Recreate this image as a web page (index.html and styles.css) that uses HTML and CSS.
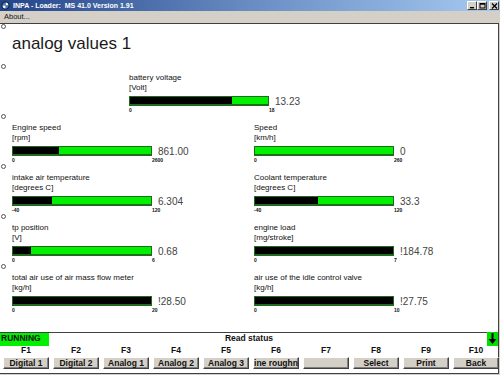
FILE: index.html
```html
<!doctype html>
<html lang="en">
<head>
	<meta charset="UTF-8">
	<title>INPA - Loader</title>
	<link rel="stylesheet" href="styles.css">
</head>
<body>
	<div class="titlebar">
		<svg class="appicon" width="9" height="9" viewBox="0 0 9 9">
			<circle cx="4.5" cy="4.5" r="4.2" fill="#1b2a4a"/>
			<path d="M4.5 1.6 A2.9 2.9 0 0 1 7.4 4.5 L4.5 4.5 Z" fill="#fff"/>
			<path d="M4.5 1.6 A2.9 2.9 0 0 0 1.6 4.5 L4.5 4.5 Z" fill="#3d7fd6"/>
			<path d="M4.5 7.4 A2.9 2.9 0 0 0 7.4 4.5 L4.5 4.5 Z" fill="#3d7fd6"/>
			<path d="M4.5 7.4 A2.9 2.9 0 0 1 1.6 4.5 L4.5 4.5 Z" fill="#fff"/>
		</svg>
		<span class="title">INPA - Loader:  MS 41.0 Version 1.91</span>
		<div class="caps">
			<span class="cap"><svg width="7" height="6" viewBox="0 0 7 6"><rect x="1" y="4" width="4" height="1.4" fill="#000"/></svg></span>
			<span class="cap"><svg width="7" height="6" viewBox="0 0 7 6"><rect x="1" y="0.5" width="5" height="4.5" fill="none" stroke="#000" stroke-width="1"/><rect x="1" y="0.5" width="5" height="1.2" fill="#000"/></svg></span>
			<span class="cap close"><svg width="7" height="6" viewBox="0 0 7 6"><path d="M1 0.5 L6 5.5 M6 0.5 L1 5.5" stroke="#000" stroke-width="1.3"/></svg></span>
		</div>
	</div>
	<div class="menubar"><span>About...</span></div>

	<div class="client">
		<div class="head">
			<i class="dot"></i>
			<h1>analog values 1</h1>
		</div>

		<div class="row">
			<i class="dot"></i>
			<div class="cols solo">
				<div class="gauge">
					<div class="name">battery voltage</div>
					<div class="unit">[Volt]</div>
					<div class="barline"><div class="bar"><div class="fill" style="width:74%"></div></div><span class="val">13.23</span></div>
					<div class="scale"><span class="lo">0</span><span class="hi">18</span></div>
				</div>
			</div>
		</div>

		<div class="row">
			<i class="dot"></i>
			<div class="cols">
				<div class="gauge">
					<div class="name">Engine speed</div>
					<div class="unit">[rpm]</div>
					<div class="barline"><div class="bar"><div class="fill" style="width:33.5%"></div></div><span class="val">861.00</span></div>
					<div class="scale"><span class="lo">0</span><span class="hi">2600</span></div>
				</div>
				<div class="gauge">
					<div class="name">Speed</div>
					<div class="unit">[km/h]</div>
					<div class="barline"><div class="bar"><div class="fill" style="width:0%"></div></div><span class="val">0</span></div>
					<div class="scale"><span class="lo">0</span><span class="hi">260</span></div>
				</div>
			</div>
		</div>

		<div class="row">
			<i class="dot"></i>
			<div class="cols">
				<div class="gauge">
					<div class="name">intake air temperature</div>
					<div class="unit">[degrees C]</div>
					<div class="barline"><div class="bar"><div class="fill" style="width:28.6%"></div></div><span class="val">6.304</span></div>
					<div class="scale"><span class="lo">-40</span><span class="hi">120</span></div>
				</div>
				<div class="gauge">
					<div class="name">Coolant temperature</div>
					<div class="unit">[degrees C]</div>
					<div class="barline"><div class="bar"><div class="fill" style="width:45.8%"></div></div><span class="val">33.3</span></div>
					<div class="scale"><span class="lo">-40</span><span class="hi">120</span></div>
				</div>
			</div>
		</div>

		<div class="row">
			<i class="dot"></i>
			<div class="cols">
				<div class="gauge">
					<div class="name">tp position</div>
					<div class="unit">[V]</div>
					<div class="barline"><div class="bar"><div class="fill" style="width:13%"></div></div><span class="val">0.68</span></div>
					<div class="scale"><span class="lo">0</span><span class="hi">6</span></div>
				</div>
				<div class="gauge">
					<div class="name">engine load</div>
					<div class="unit">[mg/stroke]</div>
					<div class="barline"><div class="bar"><div class="fill" style="width:100%"></div></div><span class="val">!184.78</span></div>
					<div class="scale"><span class="lo">0</span><span class="hi">7</span></div>
				</div>
			</div>
		</div>

		<div class="row">
			<i class="dot"></i>
			<div class="cols">
				<div class="gauge">
					<div class="name">total air use of air mass flow meter</div>
					<div class="unit">[kg/h]</div>
					<div class="barline"><div class="bar"><div class="fill" style="width:100%"></div></div><span class="val">!28.50</span></div>
					<div class="scale"><span class="lo">0</span><span class="hi">20</span></div>
				</div>
				<div class="gauge">
					<div class="name">air use of the idle control valve</div>
					<div class="unit">[kg/h]</div>
					<div class="barline"><div class="bar"><div class="fill" style="width:100%"></div></div><span class="val">!27.75</span></div>
					<div class="scale"><span class="lo">0</span><span class="hi">10</span></div>
				</div>
			</div>
		</div>
	</div>

	<div class="status">
		<span class="running">RUNNING</span>
		<span class="msg">Read status</span>
		<span class="arrow"><svg width="11" height="14" viewBox="0 0 11 14"><rect x="4.5" y="1" width="2" height="7" fill="#000"/><path d="M1.5 7 L9.5 7 L5.5 12 Z" fill="#000"/></svg></span>
	</div>

	<div class="fkeys">
		<div class="fkey"><b>F1</b><div class="btn">Digital 1</div></div>
		<div class="fkey"><b>F2</b><div class="btn">Digital 2</div></div>
		<div class="fkey"><b>F3</b><div class="btn">Analog 1</div></div>
		<div class="fkey"><b>F4</b><div class="btn">Analog 2</div></div>
		<div class="fkey"><b>F5</b><div class="btn">Analog 3</div></div>
		<div class="fkey"><b>F6</b><div class="btn">ine roughn</div></div>
		<div class="fkey"><b>F7</b><div class="btn"></div></div>
		<div class="fkey"><b>F8</b><div class="btn">Select</div></div>
		<div class="fkey"><b>F9</b><div class="btn">Print</div></div>
		<div class="fkey"><b>F10</b><div class="btn">Back</div></div>
	</div>
</body>
</html>
```
FILE: styles.css
```css
body { margin: 0; width: 500px; height: 375px; overflow: hidden; background: #d4d0c8; font-family: "Liberation Sans", Arial, sans-serif; color: #111; }

.titlebar { height: 11px; display: flex; align-items: center; background: linear-gradient(to right, #24448a, #6f93c8 55%, #a6caf0); }
.appicon { margin-left: 1px; }
.title { margin-left: 3px; color: #fff; font-size: 7px; font-weight: bold; white-space: pre; }
.caps { display: flex; margin-left: auto; margin-right: 1px; }
.cap { display: flex; align-items: center; justify-content: center; width: 10px; height: 9px; box-sizing: border-box; background: #d4d0c8; border: 1px solid; border-color: #fff #404040 #404040 #fff; }
.cap.close { margin-left: 2px; }

.menubar { height: 12px; padding-left: 4px; font-size: 7.5px; line-height: 12px; }

.client { height: 308px; background: #fff; border-top: 1px solid #404040; border-right: 1px solid #404040; box-sizing: content-box; width: 498px; }
.dot { display: block; width: 3px; height: 3px; margin-left: 1px; border: 1px solid #555; border-radius: 50%; }
.head { height: 40px; }
.head h1 { margin: 5px 0 0 12px; font-size: 17px; line-height: 20px; font-weight: normal; color: #1a1a1a; }

.row { height: 50px; }
.cols { display: grid; grid-template-columns: 242px 1fr; padding-left: 12px; margin-top: 4px; }
.cols.solo { padding-left: 129px; }
.name, .unit { font-size: 8px; line-height: 10px; white-space: nowrap; }
.barline { display: flex; align-items: center; height: 10px; margin-top: 3px; }
.bar { width: 140px; height: 10px; box-sizing: border-box; background: #00f000; border: 1px solid #1f6b1f; border-bottom-width: 2px; }
.fill { height: 100%; background: #000; }
.val { margin-left: 6px; font-size: 10px; color: #444; white-space: nowrap; }
.scale { display: flex; width: 140px; font-size: 5px; font-weight: bold; line-height: 8px; }
.scale .lo { flex: 1; }
.scale .hi { width: 0; white-space: nowrap; }

.status { display: grid; grid-template-columns: 1fr auto 1fr; height: 11px; background: #fff; border-top: 1px solid #404040; border-right: 1px solid #404040; width: 498px; font-size: 8.5px; font-weight: bold; line-height: 11px; }
.running { width: 48px; padding-left: 1px; background: #00f000; }
.arrow { justify-self: end; width: 11px; height: 14px; margin-top: -1px; background: #00e000; }

.fkeys { display: flex; gap: 4px; height: 29px; padding-left: 3px; background: #fff; border-bottom: 1px solid #404040; border-right: 1px solid #404040; width: 495px; }
.fkey { display: flex; flex-direction: column; align-items: center; width: 46px; }
.fkey b { font-size: 8.5px; line-height: 12px; }
.btn { width: 46px; height: 12px; margin-top: 1px; box-sizing: border-box; background: #d4d0c8; border: 1px solid; border-color: #fff #404040 #404040 #fff; box-shadow: inset -1px -1px #808080; font-size: 8.5px; font-weight: bold; line-height: 10px; text-align: center; white-space: nowrap; overflow: hidden; }
```
